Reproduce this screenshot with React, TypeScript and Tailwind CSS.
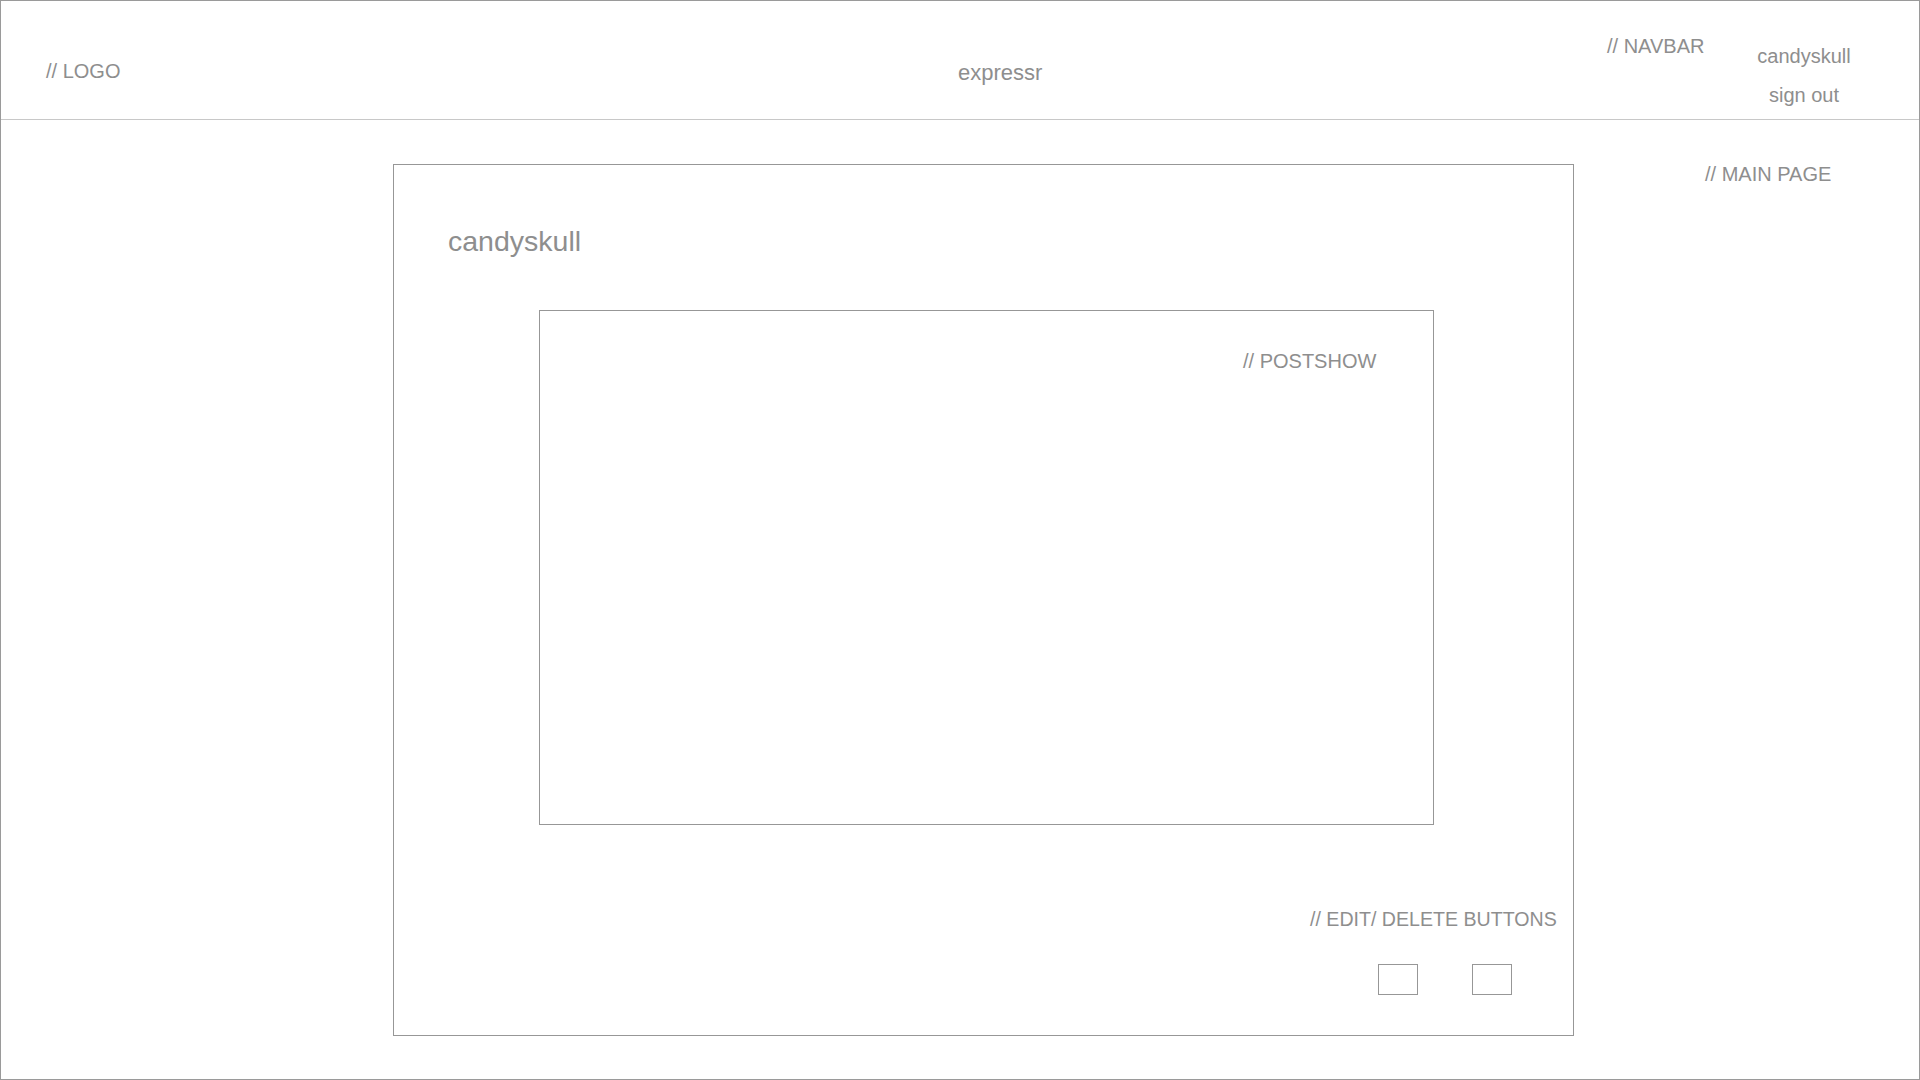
const font = { fontFamily: '"Liberation Sans", Arial, sans-serif' };

const Header = () => (
  <div className="flex h-[119px] border-b border-[#c8c8c8] text-[20px] leading-none text-[#8e8e8e]">
    <div className="w-[957px] pl-[45px] pt-[60px]">// LOGO</div>
    <div className="w-[649px] pt-[61px] text-[22px]">expressr</div>
    <div className="w-[150px] pt-[35px]">// NAVBAR</div>
    <div className="flex w-[94px] flex-col items-center gap-[19px] pt-[45px]">
      <span>candyskull</span>
      <span>sign out</span>
    </div>
  </div>
);

const PostShow = () => (
  <div className="ml-[145px] mt-[54px] h-[515px] w-[895px] border border-[#979797] pl-[703px] pt-[40px] text-[20px] leading-none">
    // POSTSHOW
  </div>
);

const EditDelete = () => (
  <div className="mt-[85px]">
    <div className="ml-[916px] text-[19.6px] leading-none">// EDIT/ DELETE BUTTONS</div>
    <div className="ml-[984px] mt-[35px] flex gap-[54px]">
      <button className="h-[31px] w-[40px] border border-[#979797]" />
      <button className="h-[31px] w-[40px] border border-[#979797]" />
    </div>
  </div>
);

export default function App() {
  return (
    <div
      className="h-[1080px] w-[1920px] overflow-hidden border border-[#9a9a9a] bg-white text-[#8e8e8e]"
      style={font}
    >
      <Header />
      <div className="flex items-start">
        <div className="ml-[392px] mt-[44px] h-[872px] w-[1181px] border border-[#979797]">
          <div className="ml-[54px] pt-[62px] text-[28.5px] leading-none">candyskull</div>
          <PostShow />
          <EditDelete />
        </div>
        <div className="ml-[131px] mt-[44px] text-[20px] leading-none">// MAIN PAGE</div>
      </div>
    </div>
  );
}
